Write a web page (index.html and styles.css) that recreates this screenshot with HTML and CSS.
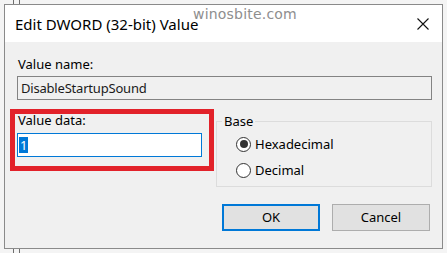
FILE: index.html
```html
<!DOCTYPE html>
<html>
<head>
    <link rel="stylesheet" href="styles.css">
</head>
<body>
    <div class="dialog">
        <div class="titlebar">
            <span class="title">Edit DWORD (32-bit) Value</span>
            <span class="watermark">winosbite.com</span>
            <svg class="close" width="12" height="12" viewBox="0 0 12 12">
                <path d="M0.5 0.5 L11.5 11.5 M11.5 0.5 L0.5 11.5" stroke="#111" stroke-width="1.1" fill="none"/>
            </svg>
        </div>

        <div class="content">
            <div class="label">Value name:</div>
            <div class="textbox readonly">DisableStartupSound</div>

            <div class="row">
                <div class="data-field">
                    <div class="label">Value data:</div>
                    <div class="textbox focused"><span class="selected">1</span></div>
                    <span class="highlight"></span>
                </div>

                <fieldset class="group">
                    <legend>Base</legend>
                    <div class="radio-list">
                        <div class="radio-item">
                            <span class="radio checked"></span>
                            <span>Hexadecimal</span>
                        </div>
                        <div class="radio-item">
                            <span class="radio"></span>
                            <span>Decimal</span>
                        </div>
                    </div>
                </fieldset>
            </div>

            <div class="buttons">
                <div class="button default">OK</div>
                <div class="button">Cancel</div>
            </div>
        </div>
    </div>
</body>
</html>
```

FILE: styles.css
```css
body {
    margin: 0;
    height: 253px;
    overflow: hidden;
    background-color: #f4f4f4;
    background-image:
        linear-gradient(to right, transparent 13px, #6e6e6e 13px, #6e6e6e 14px, transparent 14px),
        linear-gradient(to right, transparent 19px, #6e6e6e 19px, #6e6e6e 20px, transparent 20px);
    font-family: "Noto Sans", "Liberation Sans", sans-serif;
    font-size: 13px;
    color: #000;
}

.dialog {
    margin: 4px 0 0 4px;
    width: 437px;
    height: 243px;
    border: 1px solid #8a8a8a;
    background: #f0f0f0;
    display: flex;
    flex-direction: column;
}

.titlebar {
    position: relative;
    height: 37px;
    background: #fff;
    display: flex;
    align-items: center;
    padding: 0 13px 0 10px;
}

.title {
    font-size: 15px;
}

.watermark {
    position: absolute;
    left: 188px;
    top: 1px;
    font-family: "DejaVu Sans", sans-serif;
    font-size: 14px;
    color: #8e8e8e;
    letter-spacing: 0.2px;
}

.close {
    margin-left: auto;
}

.content {
    flex: 1;
    padding: 14px 10px 0 12px;
    display: flex;
    flex-direction: column;
}

.label {
    line-height: 16px;
    padding-left: 1px;
}

.textbox {
    margin-top: 4px;
    height: 22px;
    line-height: 22px;
    padding: 0 3px;
    border: 1px solid #838383;
}

.textbox.readonly {
    color: #1a1a1a;
    letter-spacing: -0.2px;
}

.textbox.focused {
    margin-top: 5px;
    height: 22px;
    padding: 0 1px;
    border-color: #0078d7;
    background: #fff;
}

.selected {
    display: inline-block;
    line-height: 16px;
    padding: 0 1px;
    background: #0078d7;
    color: #fff;
}

.row {
    margin-top: 12px;
    display: flex;
    align-items: flex-start;
    gap: 14px;
}

.data-field {
    position: relative;
    width: 185px;
}

.highlight {
    position: absolute;
    left: -7px;
    top: -3px;
    right: -12px;
    bottom: -14px;
    border: 5px solid #e2222a;
}

.group {
    margin: 1px 0 0 0;
    padding: 0;
    width: 214px;
    border: 1px solid #dcdcdc;
    min-width: 0;
}

.group legend {
    margin-left: 5px;
    padding: 0 2px;
    line-height: 16px;
}

.radio-list {
    padding: 6px 0 7px 19px;
    display: flex;
    flex-direction: column;
    gap: 8px;
}

.radio-item {
    display: flex;
    align-items: center;
    gap: 4px;
    height: 18px;
}

.radio {
    width: 13px;
    height: 13px;
    border: 1px solid #333;
    border-radius: 50%;
    background: #fff;
    display: flex;
    align-items: center;
    justify-content: center;
}

.radio.checked::after {
    content: "";
    width: 8px;
    height: 8px;
    border-radius: 50%;
    background: #333;
}

.buttons {
    margin-top: 17px;
    display: flex;
    justify-content: flex-end;
    gap: 12px;
    padding-right: 2px;
}

.button {
    width: 96px;
    height: 25px;
    line-height: 25px;
    text-align: center;
    background: #e1e1e1;
    border: 1px solid #adadad;
}

.button.default {
    width: 94px;
    height: 23px;
    line-height: 23px;
    border: 2px solid #0078d7;
}
```
